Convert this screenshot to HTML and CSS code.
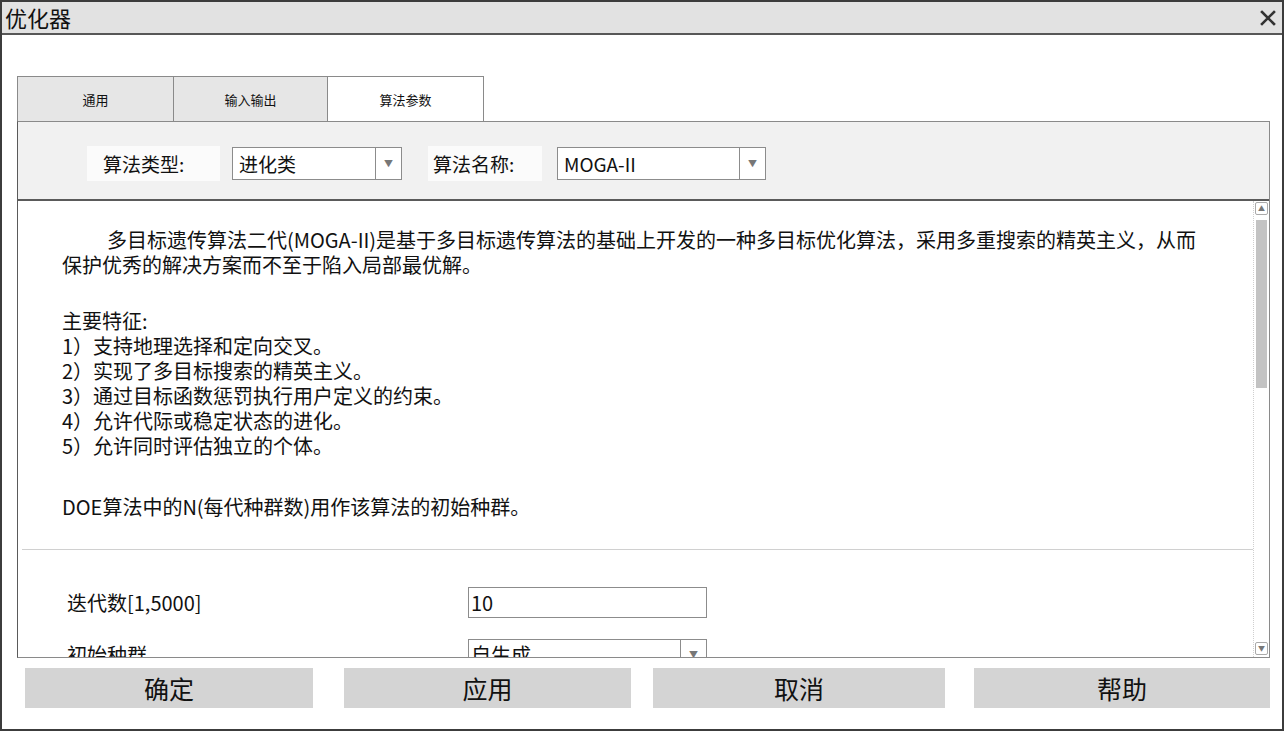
FILE: index.html
```html
<!DOCTYPE html>
<html lang="zh-CN">
<head>
	<meta charset="UTF-8">
	<title>优化器</title>
	<link rel="stylesheet" href="styles.css">
</head>
<body>
	<div class="window">
		<div class="titlebar">
			<span class="title">优化器</span>
			<svg class="close" width="16" height="16" viewBox="0 0 16 16">
				<path d="M2 2 L14 14 M14 2 L2 14" stroke="#333" stroke-width="2.6" stroke-linecap="square"/>
			</svg>
		</div>
		<div class="main">
			<div class="tabs">
				<div class="tab">通用</div>
				<div class="tab">输入输出</div>
				<div class="tab active">算法参数</div>
			</div>
			<div class="panel">
				<div class="algoBar">
					<div class="lbl">算法类型:</div>
					<div class="combo combo1">
						<span class="val">进化类</span>
						<span class="arrow">▼</span>
					</div>
					<div class="lbl lbl2">算法名称:</div>
					<div class="combo combo2">
						<span class="val">MOGA-II</span>
						<span class="arrow">▼</span>
					</div>
				</div>
				<div class="content">
					<div class="doc">
						<div class="desc">
							<p class="intro">多目标遗传算法二代(MOGA-II)是基于多目标遗传算法的基础上开发的一种多目标优化算法，采用多重搜索的精英主义，从而<br>保护优秀的解决方案而不至于陷入局部最优解。</p>
							<p class="feat">主要特征:<br>1）支持地理选择和定向交叉。<br>2）实现了多目标搜索的精英主义。<br>3）通过目标函数惩罚执行用户定义的约束。<br>4）允许代际或稳定状态的进化。<br>5）允许同时评估独立的个体。</p>
							<p class="doe">DOE算法中的N(每代种群数)用作该算法的初始种群。</p>
						</div>
						<div class="sep"></div>
						<div class="params">
							<div class="row">
								<span class="pname">迭代数[1,5000]</span>
								<div class="field">10</div>
							</div>
							<div class="row">
								<span class="pname">初始种群</span>
								<div class="combo field">
									<span class="val">自生成</span>
									<span class="arrow">▼</span>
								</div>
							</div>
						</div>
					</div>
					<div class="scrollbar">
						<div class="sbtn">▲</div>
						<div class="thumb"></div>
						<div class="fill"></div>
						<div class="sbtn">▼</div>
					</div>
				</div>
			</div>
			<div class="buttons">
				<div class="btn">确定</div>
				<div class="btn">应用</div>
				<div class="btn">取消</div>
				<div class="btn">帮助</div>
			</div>
		</div>
	</div>
</body>
</html>
```

FILE: styles.css
```css
body{
	margin: 0;
	background: #fff;
	font-family: "Noto Sans CJK SC", "Noto Sans", sans-serif;
	color: #111;
}
.window{
	width: 1284px;
	height: 731px;
	box-sizing: border-box;
	border: 2px solid #3c3c3c;
	display: flex;
	flex-direction: column;
	background: #fff;
}
.titlebar{
	height: 31px;
	background: #e2e2e2;
	border-bottom: 2px solid #575757;
	display: flex;
	align-items: center;
	justify-content: space-between;
	padding: 0 6px 0 3px;
}
.title{
	font-size: 22px;
	line-height: 31px;
}
.main{
	flex: 1;
	padding: 41px 0 0 15px;
	display: flex;
	flex-direction: column;
}
.tabs{
	display: flex;
	height: 45px;
}
.tab{
	width: 157px;
	box-sizing: border-box;
	border: 1px solid #8a8a8a;
	border-bottom: none;
	margin-right: -1px;
	background: #e6e6e6;
	font-size: 13px;
	display: flex;
	align-items: center;
	justify-content: center;
}
.tab:nth-child(2){
	width: 155px;
}
.tab.active{
	width: 157px;
	background: #fff;
}
.panel{
	width: 1253px;
	height: 537px;
	box-sizing: border-box;
	border: 1px solid #8a8a8a;
	border-left-color: #5a5a5a;
	display: flex;
	flex-direction: column;
}
.algoBar{
	height: 79px;
	flex-shrink: 0;
	box-sizing: border-box;
	background: #f1f1f1;
	border-bottom: 2px solid #5a5a5a;
	display: flex;
	align-items: center;
	padding: 5px 0 0 69px;
}
.lbl{
	width: 133px;
	height: 35px;
	box-sizing: border-box;
	background: #fbfbfb;
	font-size: 19px;
	display: flex;
	align-items: center;
	padding-left: 16px;
	margin-right: 12px;
}
.lbl2{
	width: 114px;
	padding-left: 5px;
	margin-left: 26px;
	margin-right: 15px;
}
.combo{
	height: 33px;
	box-sizing: border-box;
	border: 1px solid #8c8c8c;
	background: #fff;
	display: flex;
	align-items: center;
}
.combo1{
	width: 170px;
}
.combo2{
	width: 209px;
}
.combo .val{
	flex: 1;
	padding-left: 6px;
	font-size: 19px;
	white-space: nowrap;
}
.combo .arrow{
	width: 25px;
	height: 100%;
	border-left: 1px solid #8c8c8c;
	color: #777;
	font-size: 9px;
	display: flex;
	align-items: center;
	justify-content: center;
}
.content{
	flex: 1;
	display: flex;
	overflow: hidden;
}
.doc{
	flex: 1;
	overflow: hidden;
}
.desc{
	padding: 26px 0 0 44px;
	font-size: 20px;
	line-height: 25px;
}
.desc p{
	margin: 0;
}
.intro{
	text-indent: 45px;
	white-space: nowrap;
}
.feat{
	margin-top: 31px !important;
}
.doe{
	margin-top: 36px !important;
}
.sep{
	margin: 30px 0 0 4px;
	border-top: 1px solid #d0d0d0;
}
.params{
	padding: 37px 0 0 49px;
}
.row{
	display: flex;
	align-items: center;
	margin-bottom: 21px;
	height: 31px;
}
.pname{
	width: 401px;
	font-size: 20px;
}
.field{
	width: 239px;
	height: 31px;
	box-sizing: border-box;
	border: 1px solid #8c8c8c;
	font-size: 20px;
	line-height: 29px;
	padding-left: 2px;
}
.row .combo{
	padding-left: 0;
}
.row .combo .val{
	padding-left: 2px;
	font-size: 20px;
}
.row .combo .arrow{
	width: 25px;
}
.scrollbar{
	width: 15px;
	flex-shrink: 0;
	border-left: 1px dotted #cfcfcf;
	display: flex;
	flex-direction: column;
	align-items: center;
	padding: 1px 0 2px;
}
.sbtn{
	width: 11px;
	height: 11px;
	border: 1px solid #aaa;
	border-radius: 2px;
	font-size: 7px;
	line-height: 11px;
	color: #777;
	text-align: center;
}
.thumb{
	width: 11px;
	height: 168px;
	margin-top: 5px;
	background: #c3c3c3;
}
.fill{
	flex: 1;
}
.buttons{
	display: flex;
	padding: 10px 0 0 8px;
}
.btn{
	height: 40px;
	background: #d4d4d4;
	font-size: 25px;
	display: flex;
	align-items: center;
	justify-content: center;
}
.btn:nth-child(1){
	width: 288px;
}
.btn:nth-child(2){
	width: 287px;
	margin-left: 31px;
}
.btn:nth-child(3){
	width: 292px;
	margin-left: 22px;
}
.btn:nth-child(4){
	width: 296px;
	margin-left: 29px;
}
```
